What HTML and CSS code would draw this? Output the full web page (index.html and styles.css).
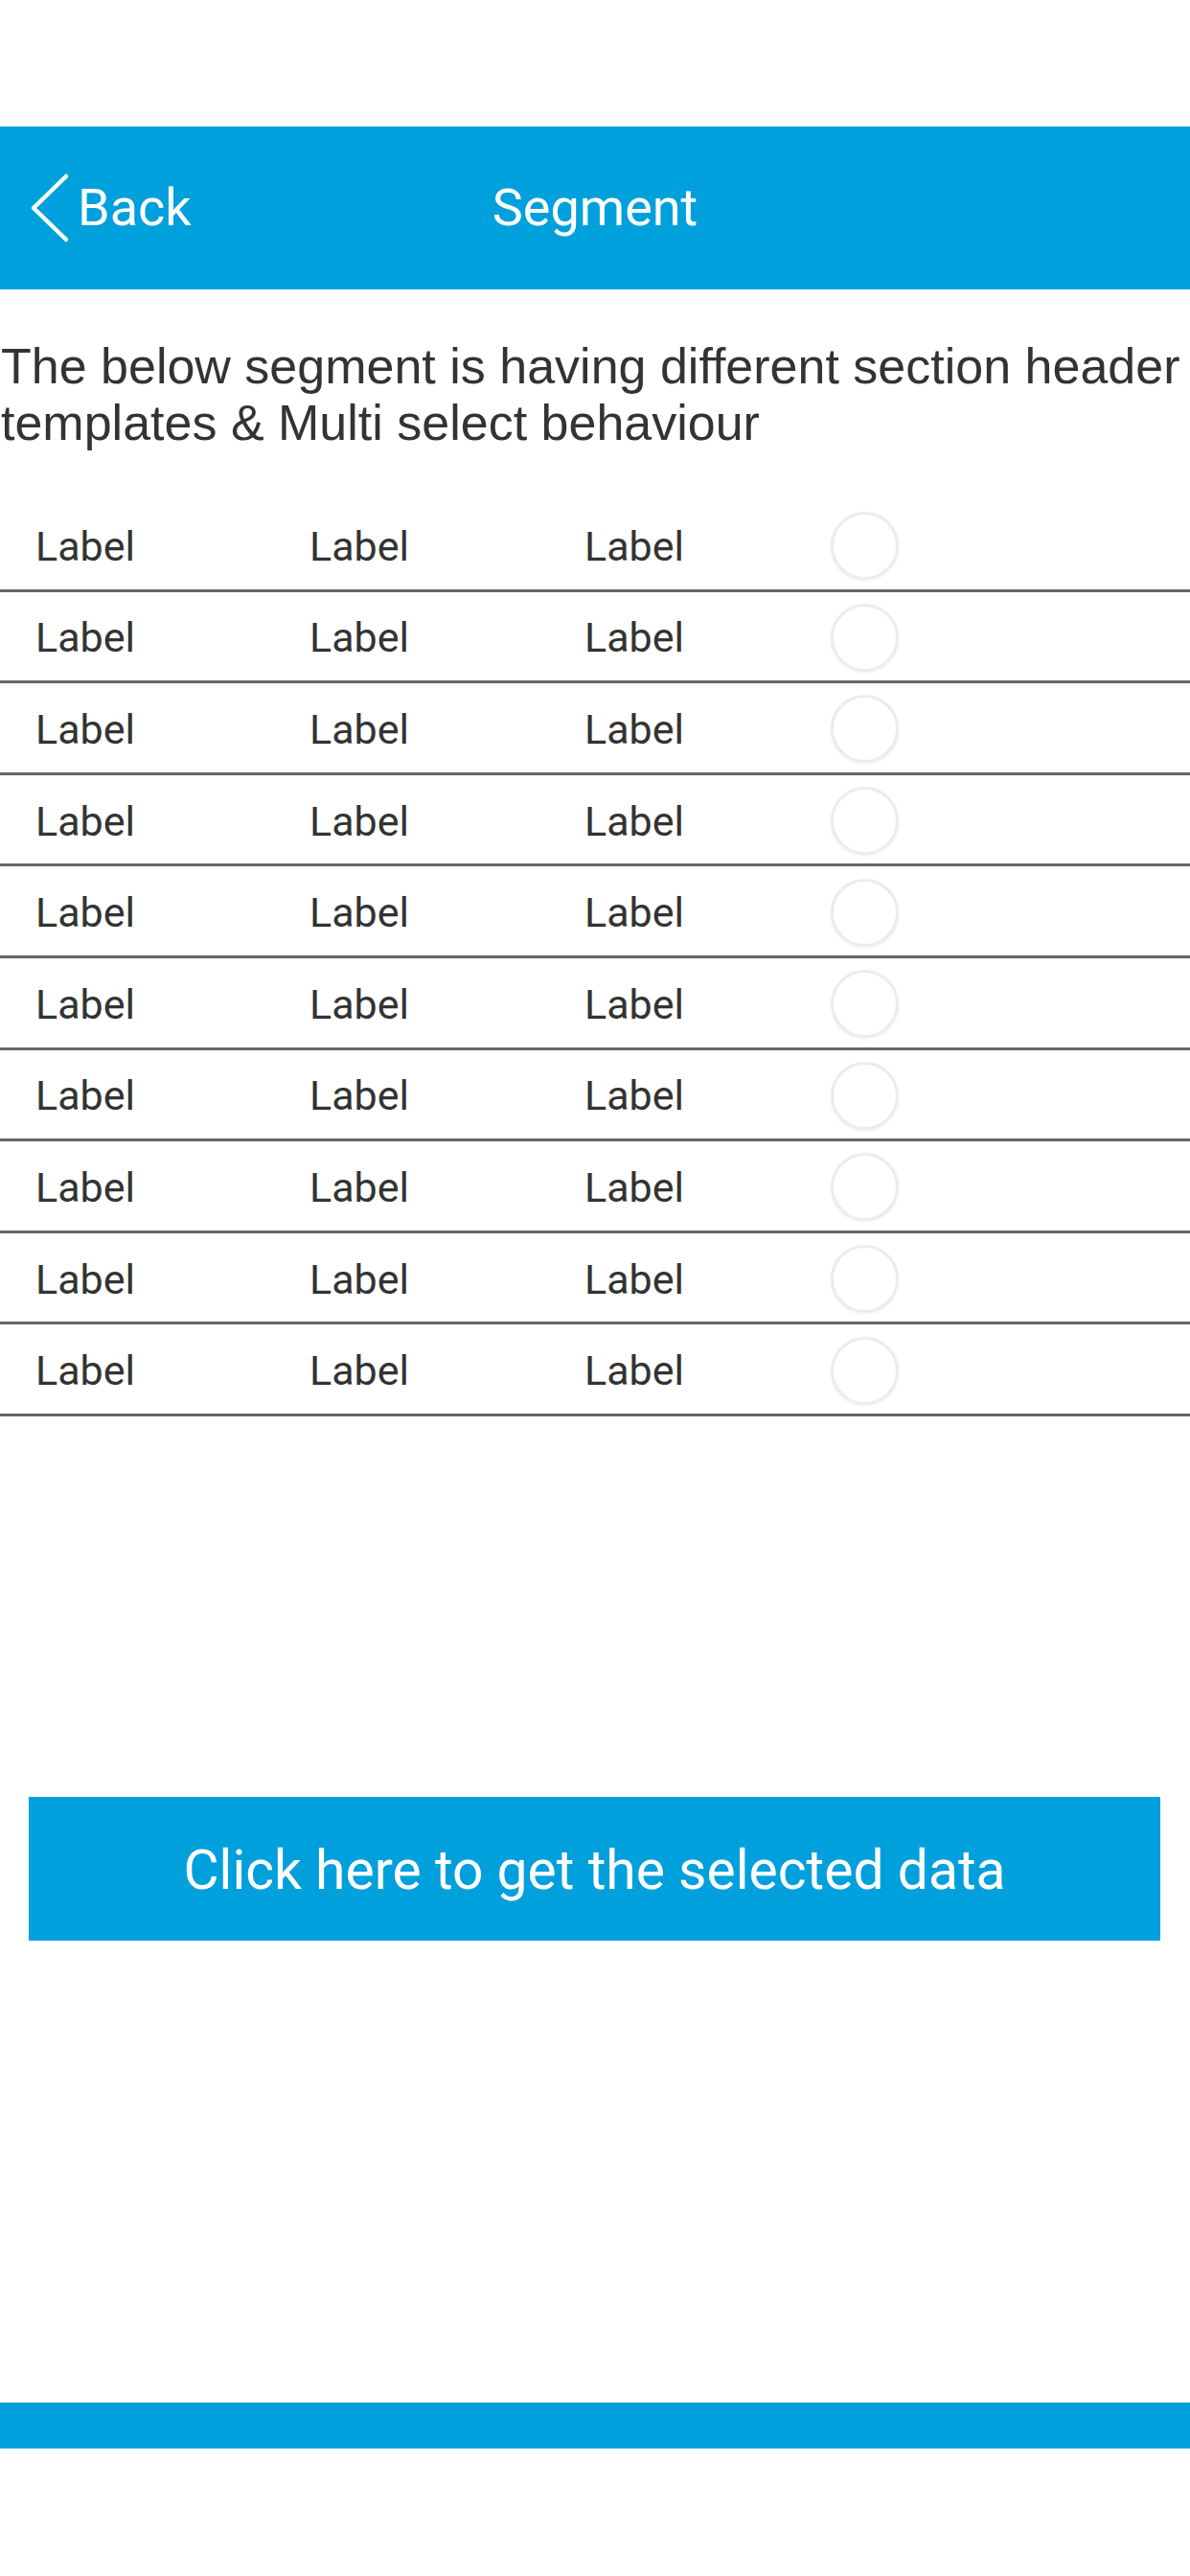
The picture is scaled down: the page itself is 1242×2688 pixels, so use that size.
FILE: index.html
```html
<!DOCTYPE html>
<html>
<head>
<meta charset="utf-8">
<link rel="stylesheet" href="styles.css">
</head>
<body>
<div class="screen">
  <div class="status"></div>
  <header class="header">
    <div class="back">
      <svg class="chev" width="44" height="74" viewBox="0 0 44 74"><path d="M38 4 L4 37 L38 70" fill="none" stroke="#fff" stroke-width="4.5" stroke-linecap="round" stroke-linejoin="round"/></svg>
      <span class="back-text">Back</span>
    </div>
    <div class="title">Segment</div>
    <div></div>
  </header>
  <p class="desc">The below segment is having different section header templates &amp; Multi select behaviour</p>
  <div class="list">
    <div class="row"><span class="lbl">Label</span><span class="lbl">Label</span><span class="lbl">Label</span><span class="radio"></span></div>
    <div class="row"><span class="lbl">Label</span><span class="lbl">Label</span><span class="lbl">Label</span><span class="radio"></span></div>
    <div class="row"><span class="lbl">Label</span><span class="lbl">Label</span><span class="lbl">Label</span><span class="radio"></span></div>
    <div class="row"><span class="lbl">Label</span><span class="lbl">Label</span><span class="lbl">Label</span><span class="radio"></span></div>
    <div class="row"><span class="lbl">Label</span><span class="lbl">Label</span><span class="lbl">Label</span><span class="radio"></span></div>
    <div class="row"><span class="lbl">Label</span><span class="lbl">Label</span><span class="lbl">Label</span><span class="radio"></span></div>
    <div class="row"><span class="lbl">Label</span><span class="lbl">Label</span><span class="lbl">Label</span><span class="radio"></span></div>
    <div class="row"><span class="lbl">Label</span><span class="lbl">Label</span><span class="lbl">Label</span><span class="radio"></span></div>
    <div class="row"><span class="lbl">Label</span><span class="lbl">Label</span><span class="lbl">Label</span><span class="radio"></span></div>
    <div class="row"><span class="lbl">Label</span><span class="lbl">Label</span><span class="lbl">Label</span><span class="radio"></span></div>
  </div>
  <div class="btn">Click here to get the selected data</div>
  <div class="footer"></div>
</div>
</body>
</html>
```
FILE: styles.css
```css
* { box-sizing: border-box; }
html, body { margin: 0; padding: 0; background: #fff; }
.screen { width: 1242px; height: 2688px; overflow: hidden; background: #fff; }
.status { height: 132px; }
.header {
  height: 170px;
  background: #00a0dc;
  display: grid;
  grid-template-columns: 1fr auto 1fr;
  align-items: center;
  color: #fff;
  font-family: Roboto, "Liberation Sans", sans-serif;
  font-size: 54px;
}
.back { display: flex; align-items: center; padding-left: 31px; }
.chev { display: block; margin-right: 6px; }
.back-text { line-height: 1; }
.title { line-height: 1; }
.desc {
  margin: 51px 0 0 0;
  padding: 0 0 0 1px;
  font-family: "Liberation Sans", Arial, sans-serif;
  font-size: 52px;
  line-height: 59px;
  color: #333;
  height: 118px;
}
.list { margin-top: 51px; }
.row {
  height: 95.6px;
  border-bottom: 3px solid #666;
  display: grid;
  grid-template-columns: 286px 287px 257px 70px;
  align-items: center;
  padding-left: 37px;
}
.lbl {
  font-family: Roboto, "Liberation Sans", sans-serif;
  font-size: 43px;
  color: #333;
  line-height: 1;
  padding-top: 4px;
}
.radio {
  width: 71px;
  height: 71px;
  border-radius: 50%;
  border: 3px solid #ececec;
  box-shadow: 0 1px 3px rgba(0,0,0,0.08);
  margin-top: 3px;
}
.btn {
  margin: 397px 31px 0 30px;
  height: 150px;
  background: #00a0dc;
  color: #fff;
  display: flex;
  align-items: center;
  justify-content: center;
  font-family: Roboto, "Liberation Sans", sans-serif;
  font-size: 57px;
  padding-top: 3px;
}
.footer {
  margin-top: 482px;
  height: 48px;
  background: #00a0dc;
}
```
